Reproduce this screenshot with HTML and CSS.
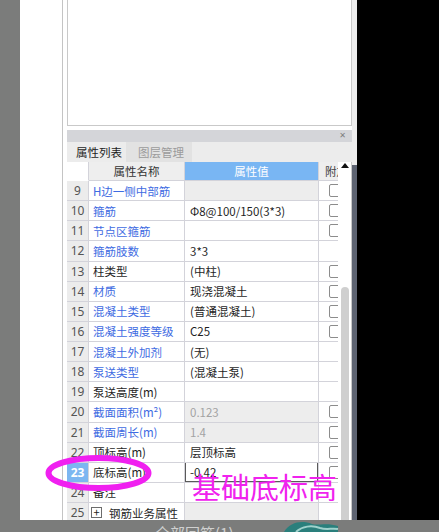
FILE: index.html
```html
<!DOCTYPE html>
<html>
<head>
<meta charset="utf-8">
<link rel="stylesheet" href="styles.css">
</head>
<body>
<div class="screen">
  <div class="main">
    <div class="leftgrey"></div>
    <div class="whitegap"></div>
    <div class="panel">
      <div class="topbox"></div>
      <div class="dockbar"><span class="close">✕</span></div>
      <div class="tabs">
        <div class="tab active">属性列表</div>
        <div class="tab">图层管理</div>
      </div>
      <div class="gridwrap">
        <div class="table">
          <div class="row head">
            <div class="c num blank"></div>
            <div class="c name">属性名称</div>
            <div class="c val">属性值</div>
            <div class="c att">附加</div>
          </div>
          <div class="row"><div class="c num">9</div><div class="c name blue">H边一侧中部筋</div><div class="c val grey"></div><div class="c att"><span class="cb"></span></div></div>
          <div class="row"><div class="c num">10</div><div class="c name blue">箍筋</div><div class="c val">Φ8@100/150(3*3)</div><div class="c att"><span class="cb"></span></div></div>
          <div class="row"><div class="c num">11</div><div class="c name blue">节点区箍筋</div><div class="c val"></div><div class="c att"><span class="cb"></span></div></div>
          <div class="row"><div class="c num">12</div><div class="c name blue">箍筋肢数</div><div class="c val">3*3</div><div class="c att"></div></div>
          <div class="row"><div class="c num">13</div><div class="c name">柱类型</div><div class="c val">(中柱)</div><div class="c att"><span class="cb"></span></div></div>
          <div class="row"><div class="c num">14</div><div class="c name blue">材质</div><div class="c val">现浇混凝土</div><div class="c att"><span class="cb"></span></div></div>
          <div class="row"><div class="c num">15</div><div class="c name blue">混凝土类型</div><div class="c val">(普通混凝土)</div><div class="c att"><span class="cb"></span></div></div>
          <div class="row"><div class="c num">16</div><div class="c name blue">混凝土强度等级</div><div class="c val">C25</div><div class="c att"><span class="cb"></span></div></div>
          <div class="row"><div class="c num">17</div><div class="c name blue">混凝土外加剂</div><div class="c val">(无)</div><div class="c att"></div></div>
          <div class="row"><div class="c num">18</div><div class="c name blue">泵送类型</div><div class="c val">(混凝土泵)</div><div class="c att"></div></div>
          <div class="row"><div class="c num">19</div><div class="c name">泵送高度(m)</div><div class="c val"></div><div class="c att"></div></div>
          <div class="row"><div class="c num">20</div><div class="c name blue">截面面积(m²)</div><div class="c val grey dim">0.123</div><div class="c att"><span class="cb"></span></div></div>
          <div class="row"><div class="c num">21</div><div class="c name blue">截面周长(m)</div><div class="c val grey dim">1.4</div><div class="c att"><span class="cb"></span></div></div>
          <div class="row"><div class="c num">22</div><div class="c name">顶标高(m)</div><div class="c val">层顶标高</div><div class="c att"><span class="cb"></span></div></div>
          <div class="row"><div class="c num sel">23</div><div class="c name">底标高(m)</div><div class="c val edit"><span class="editbox">-0.42</span></div><div class="c att"><span class="cb"></span></div></div>
          <div class="row"><div class="c num">24</div><div class="c name">备注</div><div class="c val"></div><div class="c att"></div></div>
          <div class="row"><div class="c num">25</div><div class="c name"><span class="plus">+</span>钢筋业务属性</div><div class="c val grey"></div><div class="c att"></div></div>
        </div>
        <div class="vscroll">
          <div class="uparrow"></div>
          <div class="thumb"></div>
        </div>
      </div>
    </div>
    <div class="splitter"><span class="grip"></span></div>
    <div class="black"></div>
  </div>
  <div class="status">
    <span class="stext">全部回筋(1)</span>
    <svg class="logo" width="60" height="12" viewBox="0 0 60 12"><path d="M2 12 C8 2 20 0 30 4 C36 6 44 2 56 6 L56 12 Z" fill="#2a7f7c"/><path d="M14 12 C20 6 30 5 38 8 C44 10 50 8 56 9" stroke="#9fd1cc" stroke-width="2" fill="none"/></svg>
  </div>
  <svg class="ellipse" width="120" height="50" viewBox="0 0 120 50"><ellipse cx="53.5" cy="23" rx="50" ry="15" fill="none" stroke="#f020f0" stroke-width="6"/></svg>
  <div class="note">基础底标高</div>
</div>
</body>
</html>
```

FILE: styles.css
```css
* { box-sizing: border-box; }
html, body { margin: 0; padding: 0; }
body {
  width: 439px;
  height: 532px;
  overflow: hidden;
  background: #7b7c7b;
  font-family: "Noto Sans CJK SC", "Noto Sans", sans-serif;
  font-size: 11.5px;
}
.screen {
  position: relative;
  width: 439px;
  height: 532px;
}
.main {
  display: flex;
  height: 520px;
  overflow: hidden;
}
.leftgrey { width: 20px; background: #7b7c7b; }
.whitegap { width: 42px; background: #ffffff; }
.panel {
  width: 290px;
  background: #ffffff;
  border-left: 1px solid #c4c4c4;
  padding-left: 4px;
  display: flex;
  flex-direction: column;
}
.topbox {
  height: 126px;
  border: 1px solid #c9c9c9;
  border-top: none;
  background: #fff;
}
.dockbar {
  margin-top: 4px;
  height: 12px;
  background: #d4d5d9;
  display: flex;
  justify-content: flex-end;
  align-items: center;
  padding-right: 6px;
}
.close {
  font-size: 8px;
  color: #7d7d7d;
  line-height: 8px;
  font-family: "DejaVu Sans", sans-serif;
  font-weight: bold;
}
.tabs {
  height: 20px;
  background: #ececec;
  display: flex;
  align-items: stretch;
}
.tab {
  display: flex;
  align-items: center;
  color: #9b9b9b;
  background: #e2e2e2;
  margin-left: 1px;
  width: 66px;
  padding-left: 12px;
  white-space: nowrap;
}
.tab.active {
  color: #1e1e1e;
  background: #ececec;
  margin-left: 0;
  width: 58px;
  padding-left: 9px;
}
.gridwrap {
  display: flex;
  flex: 1;
  min-height: 0;
}
.table {
  width: 271px;
  display: flex;
  flex-direction: column;
}
.row {
  display: flex;
  height: 20.125px;
  flex: none;
}
.row.head { height: 19px; }
.c {
  border-right: 1px solid #d3d3da;
  border-bottom: 1px solid #d3d3da;
  display: flex;
  align-items: center;
  white-space: nowrap;
  overflow: hidden;
  color: #1f1f1f;
}
.num {
  width: 22px;
  justify-content: center;
  background: #ececec;
  color: #545454;
  font-family: "Noto Sans", sans-serif;
  font-size: 12px;
}
.num.blank { background: #fff; border-bottom: 1px solid #fff; }
.num.sel { background: #7cb6f1; color: #fff; font-weight: bold; }
.name {
  width: 96px;
  padding-left: 4px;
  background: #fff;
}
.blue { color: #3e6be2; }
.val {
  width: 134px;
  padding-left: 5px;
  background: #fff;
}
.val.grey { background: #ededed; }
.val.dim { color: #a3a3a3; }
.att {
  width: 19px;
  border-right: none;
  padding-left: 10px;
  background: #fff;
}
.cb {
  display: block;
  flex: none;
  width: 13px;
  height: 13px;
  border: 1px solid #8c8c8c;
  border-radius: 2px;
  background: #fff;
}
.head .c { background: #eeeeee; color: #333; }
.head .num.blank { background: #fff; }
.head .name { justify-content: center; padding-left: 0; }
.head .val { justify-content: center; padding-left: 0; background: #79b6f3; color: #fff; }
.head .att { padding-left: 6px; color: #444; }
.val.edit { padding: 0; }
.editbox {
  display: flex;
  align-items: center;
  width: 134px;
  height: 20px;
  border: 1px solid #5a5a5a;
  padding-left: 4px;
  background: #fff;
}
.plus {
  display: inline-flex;
  flex: none;
  width: 11px;
  height: 11px;
  border: 1px solid #6c6c6c;
  align-items: center;
  justify-content: center;
  font-size: 11px;
  line-height: 9px;
  margin-right: 7px;
  margin-left: -2px;
  color: #222;
}
.vscroll {
  position: relative;
  background: #fff;
  border-right: 1px solid #c9c9c9;
  width: 14px;
}
.uparrow {
  margin: 1px 0 0 3px;
  width: 0;
  height: 0;
  border-left: 4px solid transparent;
  border-right: 4px solid transparent;
  border-bottom: 5px solid #111;
}
.thumb {
  margin: 119px 0 0 3px;
  width: 8px;
  height: 260px;
  background: #cfcfcf;
  border-radius: 4px 4px 0 0;
}
.splitter {
  width: 5px;
  background: linear-gradient(#ededed 0, #ededed 165px, #5e6472 165px);
  position: relative;
}
.black { flex: 1; background: #000; }
.status {
  height: 12px;
  background: #7b7c7b;
  position: relative;
  overflow: hidden;
}
.stext {
  position: absolute;
  left: 155px;
  top: 5px;
  color: #cfd0cf;
  font-size: 15px;
  line-height: 16px;
  white-space: nowrap;
}
.logo { position: absolute; left: 282px; top: 0; }
.ellipse { position: absolute; left: 45px; top: 450px; }
.note {
  position: absolute;
  left: 192px;
  top: 469px;
  font-size: 29px;
  line-height: 34px;
  color: #f022ee;
  white-space: nowrap;
}
```
